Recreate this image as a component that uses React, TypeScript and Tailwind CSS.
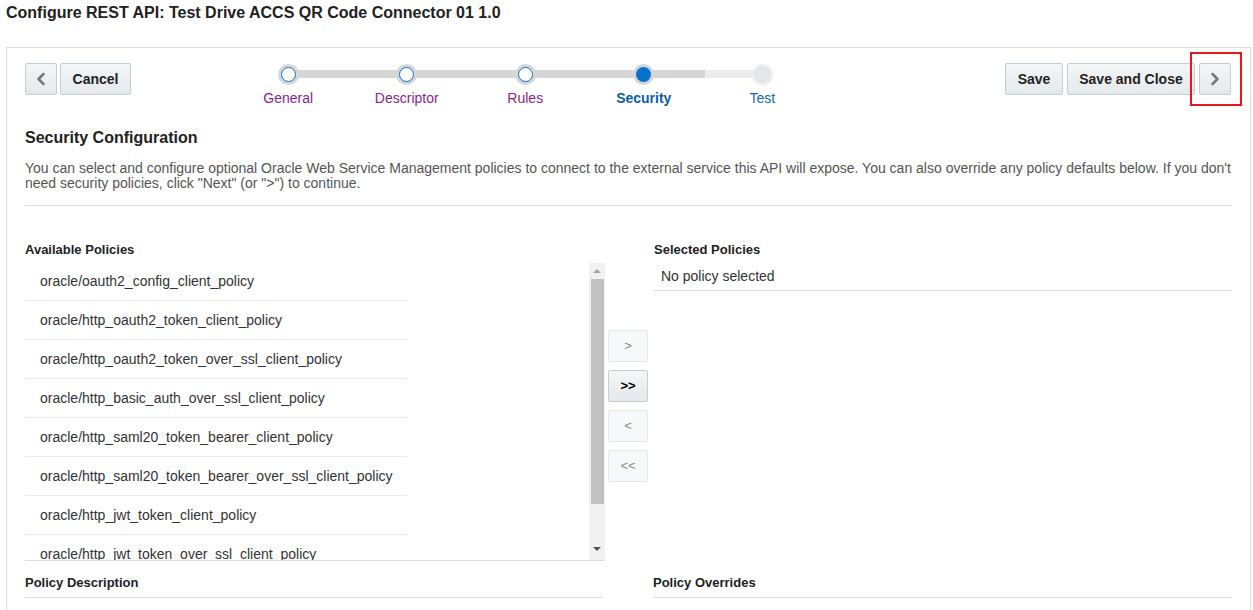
import { ChevronLeft, ChevronRight } from 'lucide-react';

const steps = [
  { label: 'General', state: 'done' },
  { label: 'Descriptor', state: 'done' },
  { label: 'Rules', state: 'done' },
  { label: 'Security', state: 'current' },
  { label: 'Test', state: 'todo' },
];

const policies = [
  'oracle/oauth2_config_client_policy',
  'oracle/http_oauth2_token_client_policy',
  'oracle/http_oauth2_token_over_ssl_client_policy',
  'oracle/http_basic_auth_over_ssl_client_policy',
  'oracle/http_saml20_token_bearer_client_policy',
  'oracle/http_saml20_token_bearer_over_ssl_client_policy',
  'oracle/http_jwt_token_client_policy',
  'oracle/http_jwt_token_over_ssl_client_policy',
];

const btn =
  'h-8 rounded-[2px] border border-[#c4ced7] bg-gradient-to-b from-[#f4f6f7] to-[#e5e9ec] text-[14px] font-bold text-[#222] flex items-center justify-center';

function Stepper() {
  return (
    <div className="relative ml-[98px] flex">
      <div className="absolute left-[59px] top-[6px] h-[8px] w-[417px] bg-[#d6d6d6]" />
      <div className="absolute left-[476px] top-[6px] h-[8px] w-[58px] bg-[#ececec]" />
      {steps.map((s) => (
        <div key={s.label} className="relative flex w-[118.5px] flex-col items-center">
          <div
            className={
              'flex h-[21px] w-[21px] items-center justify-center rounded-full ' +
              (s.state === 'todo' ? 'bg-[#ececec]' : 'bg-[#d6d6d6]')
            }
          >
            {s.state === 'done' && (
              <div className="h-[15px] w-[15px] rounded-full border-[1.5px] border-[#0572ce] bg-white" />
            )}
            {s.state === 'current' && <div className="h-[15px] w-[15px] rounded-full bg-[#0572ce]" />}
            {s.state === 'todo' && (
              <div className="h-[15px] w-[15px] rounded-full border border-[#d6dfe6] bg-[#e4e8ea]" />
            )}
          </div>
          <span
            className={
              'mt-[4px] text-[14px] leading-[18px] ' +
              (s.state === 'done'
                ? 'text-[#8a1f8c]'
                : s.state === 'current'
                ? 'font-bold text-[#0a5fa8]'
                : 'text-[#0c6cba]')
            }
          >
            {s.label}
          </span>
        </div>
      ))}
    </div>
  );
}

function Transfer({ label, enabled }: { label: string; enabled?: boolean }) {
  return (
    <button
      className={
        'h-8 w-10 rounded-[2px] border text-[13px] ' +
        (enabled
          ? 'border-[#c4ced7] bg-gradient-to-b from-[#f4f6f7] to-[#e5e9ec] font-bold text-black'
          : 'border-[#e3e7ea] bg-[#f7f8f9] text-[#8a8a8a]')
      }
    >
      {label}
    </button>
  );
}

export default function App() {
  return (
    <div
      className="h-[610px] overflow-hidden bg-white px-[6px] text-[#333]"
      style={{ fontFamily: '"Liberation Sans", Arial, sans-serif' }}
    >
      <h1 className="pt-[3px] text-[16px] font-bold leading-[19px] text-[#222]">
        Configure REST API: Test Drive ACCS QR Code Connector 01 1.0
      </h1>

      <div className="mt-[25px] h-[600px] w-[1245px] border border-[#d6dfe6] px-[18px] pt-[15px]">
        {/* top bar */}
        <div className="flex items-start">
          <div className="flex gap-[3px]">
            <button className={btn + ' w-8 text-[#777]'}>
              <ChevronLeft size={20} strokeWidth={3} />
            </button>
            <button className={btn + ' w-[71px]'}>Cancel</button>
          </div>
          <div className="pt-[1px]">
            <Stepper />
          </div>
          <div className="ml-auto mr-[1px] flex gap-[4px]">
            <button className={btn + ' w-[58px]'}>Save</button>
            <button className={btn + ' w-[128px]'}>Save and Close</button>
            <div className="relative">
              <button className={btn + ' w-8 border-[#8fb6e6] text-[#777]'}>
                <ChevronRight size={20} strokeWidth={3} />
              </button>
              <div className="absolute left-[-9px] top-[-11px] h-[54px] w-[52px] border-2 border-[#e8151b]" />
            </div>
          </div>
        </div>

        {/* heading */}
        <h2 className="mt-[21px] text-[16px] font-bold leading-[20px] text-[#222]">Security Configuration</h2>
        <p className="mt-[13px] text-[14px] leading-[15px] text-[#555]">
          You can select and configure optional Oracle Web Service Management policies to connect to the external
          service this API will expose. You can also override any policy defaults below. If you don't need security
          policies, click "Next" (or "&gt;") to continue.
        </p>
        <div className="mt-[14px] h-px bg-[#d6dfe6]" />

        {/* shuttle */}
        <div className="mt-[36px] flex">
          <div className="w-[580px]">
            <div className="text-[13px] font-bold leading-[16px] text-[#222]">Available Policies</div>
            <div className="mt-[5px] flex h-[298px] border-b border-[#d6dfe6]">
              <div className="flex-1 overflow-hidden">
                <ul className="w-[382px]">
                  {policies.map((p) => (
                    <li
                      key={p}
                      className="flex h-[39px] items-center border-b border-[#e6eaed] pl-[15px] text-[14px] text-[#333] first:h-[38px]"
                    >
                      {p}
                    </li>
                  ))}
                </ul>
              </div>
              <div className="flex w-[16px] flex-col items-center bg-[#f1f1f1]">
                <div className="flex h-[16px] items-center justify-center">
                  <div className="h-0 w-0 border-x-[4px] border-b-[4px] border-x-transparent border-b-[#a3a3a3]" />
                </div>
                <div className="h-[225px] w-[13px] bg-[#c1c1c1]" />
                <div className="flex-1" />
                <div className="flex h-[22px] items-center justify-center">
                  <div className="h-0 w-0 border-x-[4px] border-t-[4px] border-x-transparent border-t-[#505050]" />
                </div>
              </div>
            </div>
          </div>

          <div className="ml-[3px] flex flex-col gap-[8px] pt-[88px]">
            <Transfer label=">" />
            <Transfer label=">>" enabled />
            <Transfer label="<" />
            <Transfer label="<<" />
          </div>

          <div className="ml-[6px] flex-1">
            <div className="text-[13px] font-bold leading-[16px] text-[#222]">Selected Policies</div>
            <div className="mt-[4px] flex h-[29px] items-center border-b border-[#d6dfe6] pl-[7px] text-[14px] text-[#333]">
              No policy selected
            </div>
          </div>
        </div>

        {/* bottom */}
        <div className="mt-[14px] flex">
          <div className="w-[578px] border-b border-[#d6dfe6] pb-[6px] text-[13px] font-bold leading-[16px] text-[#222]">
            Policy Description
          </div>
          <div className="ml-[50px] flex-1 border-b border-[#d6dfe6] pb-[6px] text-[13px] font-bold leading-[16px] text-[#222]">
            Policy Overrides
          </div>
        </div>
      </div>
    </div>
  );
}
